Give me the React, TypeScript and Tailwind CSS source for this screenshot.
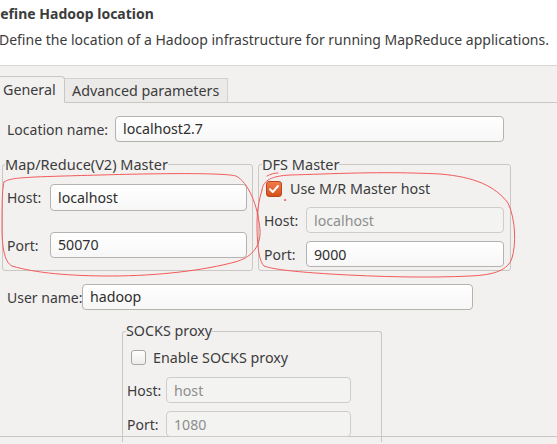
import React from "react";

const font = { fontFamily: '"Noto Sans", "DejaVu Sans", sans-serif' };

const Field = ({ value, disabled = false, className = "" }: { value: string; disabled?: boolean; className?: string }) => (
  <div
    className={`flex h-[26px] items-center rounded-[4px] border px-[7px] text-[14.2px] ${
      disabled
        ? "border-[#cfcdca] bg-[#f3f3f2] text-[#8e8e8c]"
        : "border-[#b5b3af] bg-gradient-to-b from-white to-[#f7f7f7] text-[#2e2e2e]"
    } ${className}`}
  >
    {value}
  </div>
);

const Check = ({ checked }: { checked: boolean }) =>
  checked ? (
    <div className="flex h-[16px] w-[16px] items-center justify-center rounded-[3px] border border-[#b9461a] bg-gradient-to-b from-[#f37b4a] to-[#d4501c]">
      <svg width="12" height="12" viewBox="0 0 12 12">
        <path d="M2 6.2 L4.8 9 L10 3" fill="none" stroke="white" strokeWidth="2" strokeLinecap="round" strokeLinejoin="round" />
      </svg>
    </div>
  ) : (
    <div className="h-[15px] w-[15px] rounded-[3px] border border-[#a8a6a2] bg-gradient-to-b from-white to-[#ececeb]" />
  );

const App = () => {
  return (
    <div className="relative h-[444px] w-[557px] overflow-hidden whitespace-nowrap bg-[#f2f1f0] text-[14px] text-[#3c3c3c]" style={font}>
      {/* header */}
      <div className="h-[66px] border-b border-[#d8d6d2] bg-white">
        <div className="-ml-[10px] pt-[3px] font-bold leading-[22px] text-[#3c3c3c]">Define Hadoop location</div>
        <div className="-ml-[1px] pt-[5px] leading-[20px]">
          Define the location of a Hadoop infrastructure for running MapReduce applications.
        </div>
      </div>

      {/* tabs */}
      <div className="mt-[10px] flex h-[27px] items-end border-b border-[#c9c7c3]">
        <div className="-mb-px -ml-[3px] flex h-[27px] w-[68px] items-center rounded-tr-[4px] border border-[#c9c7c3] border-b-[#f2f1f0] bg-[#f2f1f0] pl-[5px] text-[14.3px]">
          General
        </div>
        <div className="flex h-[24px] w-[163px] items-center border-r border-t border-[#d3d1cd] bg-[#ebeae8] pl-[7px] text-[14.3px]">
          Advanced parameters
        </div>
      </div>

      {/* panel */}
      <div className="h-[334px] border-b border-[#c8c6c2]">
        <div className="flex items-center pt-[13px]">
          <span className="w-[115px] pl-[7px]">Location name:</span>
          <Field value="localhost2.7" className="w-[389px]" />
        </div>

        <div className="mt-[13px] flex">
          <fieldset className="ml-[2px] h-[116px] w-[251px] rounded-[3px] border border-[#cac8c4] px-[4px]">
            <legend className="-ml-[2px] text-[14.5px] leading-[18px]">Map/Reduce(V2) Master</legend>
            <div className="mt-[11px] flex items-center">
              <span className="w-[43px]">Host:</span>
              <Field value="localhost" className="h-[27px] w-[197px]" />
            </div>
            <div className="mt-[21px] flex items-center">
              <span className="w-[43px]">Port:</span>
              <Field value="50070" className="w-[197px]" />
            </div>
          </fieldset>

          <fieldset className="ml-[5px] h-[116px] w-[253px] rounded-[3px] border border-[#cac8c4] px-[5px]">
            <legend className="-ml-[2px] text-[14.5px] leading-[18px]">DFS Master</legend>
            <div className="mt-[5px] flex items-center gap-[8px] pl-[2px]">
              <Check checked />
              <span className="text-[14.3px]">Use M/R Master host</span>
            </div>
            <div className="mt-[8px] flex items-center">
              <span className="w-[42px]">Host:</span>
              <Field value="localhost" disabled className="w-[198px]" />
            </div>
            <div className="mt-[8px] flex items-center">
              <span className="w-[42px]">Port:</span>
              <Field value="9000" className="w-[198px]" />
            </div>
          </fieldset>
        </div>

        <div className="mt-[13px] flex items-center">
          <span className="w-[82px] pl-[7px]">User name:</span>
          <Field value="hadoop" className="w-[391px]" />
        </div>

        <fieldset className="ml-[122px] mt-[12px] h-[120px] w-[260px] rounded-t-[3px] border border-b-0 border-[#cac8c4] px-[4px]">
          <legend className="-ml-[1px] text-[14.3px] leading-[18px]">SOCKS proxy</legend>
          <div className="mt-[7px] flex items-center gap-[7px] pl-[4px]">
            <Check checked={false} />
            <span className="text-[14.3px]">Enable SOCKS proxy</span>
          </div>
          <div className="mt-[9px] flex items-center">
            <span className="w-[39px]">Host:</span>
            <Field value="host" disabled className="w-[185px]" />
          </div>
          <div className="mt-[8px] flex items-center">
            <span className="w-[39px]">Port:</span>
            <Field value="1080" disabled className="w-[185px]" />
          </div>
        </fieldset>
      </div>

      {/* hand-drawn annotations */}
      <svg className="pointer-events-none absolute left-0 top-0" width="557" height="444" viewBox="0 0 557 444">
        <g fill="none" stroke="#f25a5a" strokeWidth="1" strokeLinecap="round" strokeLinejoin="round">
          <path d="M4 182 C 10 177, 30 177, 100 175 S 225 173, 236 176 C 248 182, 258 205, 260 230 C 261 248, 250 258, 235 262 C 205 270, 160 276, 110 276 C 70 276, 35 273, 12 266 C 4 262, 2 245, 2 230 C 2 205, 2 190, 4 182" />
          <path d="M262 190 C 263 180, 272 176, 290 175 C 330 174, 380 171, 440 174 C 475 177, 495 186, 508 203 C 516 220, 516 245, 512 258 C 508 270, 495 275, 470 276 C 430 278, 380 277, 330 274 C 300 272, 275 270, 264 266 C 258 260, 257 240, 257 222 C 257 210, 259 200, 262 190" />
          <path d="M267 176 C 271 174, 274 173, 278 173" />
          <circle cx="285" cy="200" r="0.6" fill="#f25a5a" />
        </g>
      </svg>
    </div>
  );
};

export default App;
